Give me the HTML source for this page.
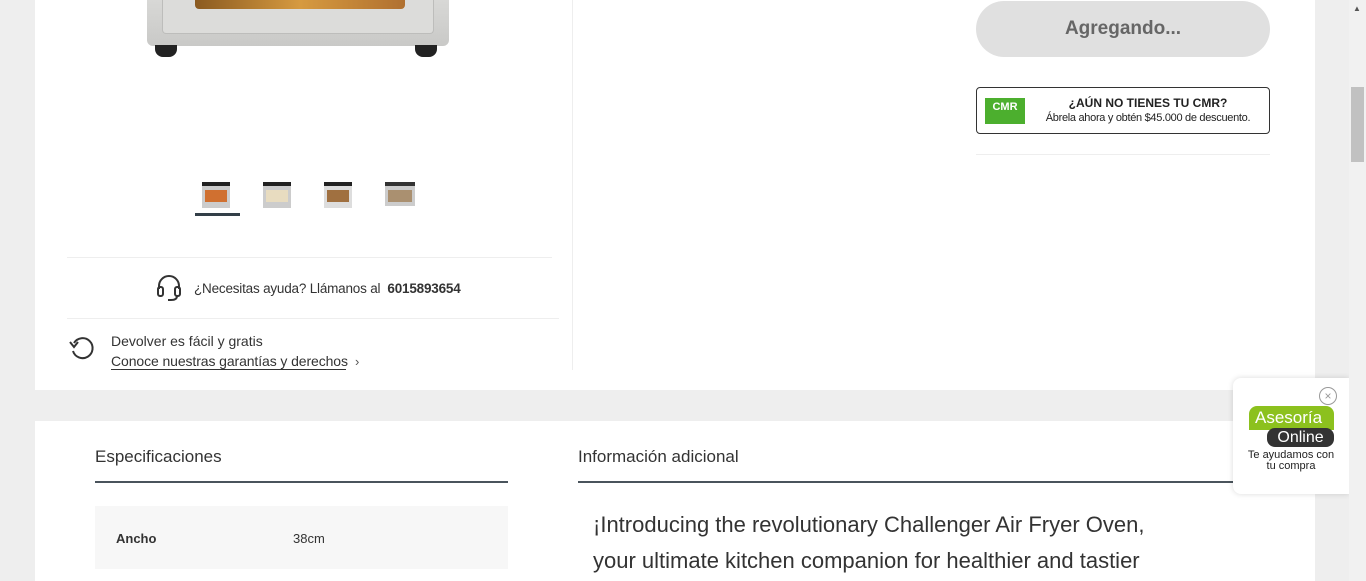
<!DOCTYPE html>
<html><head><meta charset="utf-8"><style>
*{margin:0;padding:0;box-sizing:border-box}
body{width:1366px;height:581px;overflow:hidden;background:#eeeeee;font-family:"Liberation Sans",sans-serif;color:#333;position:relative}
.a{position:absolute}
.card{background:#fff}
</style></head><body>
<div class="a card" style="left:35px;top:0;width:1280px;height:390px"></div>
<!-- oven bottom -->
<div class="a" style="left:147px;top:0;width:302px;height:46px;background:linear-gradient(#d8d8d6,#c9c9c7);border-radius:0 0 6px 6px"></div>
<div class="a" style="left:162px;top:0;width:272px;height:34px;border:1px solid #bdbdbb;border-top:none;border-radius:0 0 4px 4px;background:#dcdcda"></div>
<div class="a" style="left:195px;top:0;width:210px;height:9px;background:linear-gradient(90deg,#8a5a20,#d69a40,#b07030);border-radius:0 0 4px 4px"></div>
<div class="a" style="left:155px;top:45px;width:22px;height:12px;background:#222;border-radius:0 0 8px 8px"></div>
<div class="a" style="left:415px;top:45px;width:22px;height:12px;background:#222;border-radius:0 0 8px 8px"></div>
<!-- thumbs -->
<div class="a" style="left:202px;top:182px;width:28px;height:26px;background:#ccc;border-top:4px solid #222"><div style="margin:4px 3px;height:12px;background:#d07030"></div></div>
<div class="a" style="left:263px;top:182px;width:28px;height:26px;background:#ccc;border-top:4px solid #222"><div style="margin:4px 3px;height:12px;background:#e8dcc0"></div></div>
<div class="a" style="left:324px;top:182px;width:28px;height:26px;background:#ddd;border-top:4px solid #222"><div style="margin:4px 3px 0 3px;height:12px;background:#a07040"></div></div>
<div class="a" style="left:385px;top:182px;width:30px;height:24px;background:#ccc;border-top:4px solid #333"><div style="margin:4px 3px;height:12px;background:#aa9070"></div></div>
<div class="a" style="left:195px;top:213px;width:45px;height:3px;background:#333f48"></div>
<div class="a" style="left:67px;top:257px;width:485px;height:1px;background:#eee"></div>
<div class="a" style="left:67px;top:318px;width:492px;height:1px;background:#eee"></div>
<div class="a" style="left:572px;top:0;width:1px;height:370px;background:#eee"></div>
<svg class="a" style="left:156px;top:274px" width="26" height="28" viewBox="0 0 26 28"><path d="M3 15V12a10 10 0 0 1 20 0v3" fill="none" stroke="#333" stroke-width="2"/><rect x="2" y="13" width="5" height="9" rx="2" fill="none" stroke="#333" stroke-width="2"/><rect x="19" y="13" width="5" height="9" rx="2" fill="none" stroke="#333" stroke-width="2"/><path d="M21 22q0 4-6 4h-3" fill="none" stroke="#333" stroke-width="2"/></svg>
<div class="a" style="left:194px;top:281px;font-size:13.5px;color:#333;letter-spacing:-0.2px">¿Necesitas ayuda? Llámanos al &nbsp;<b>6015893654</b></div>
<svg class="a" style="left:68px;top:335px" width="28" height="26" viewBox="0 0 28 26"><path d="M6 8A10 10 0 1 1 5 16" fill="none" stroke="#333" stroke-width="2"/><path d="M2 7l4 5 4-5" fill="none" stroke="#333" stroke-width="2"/></svg>
<div class="a" style="left:111px;top:333px;font-size:14px;color:#333">Devolver es fácil y gratis</div>
<div class="a" style="left:111px;top:353px;font-size:14px;color:#333;border-bottom:1px solid #333;line-height:16px;letter-spacing:-0.1px;width:235px;white-space:nowrap">Conoce nuestras garantías y derechos</div>
<div class="a" style="left:355px;top:354px;font-size:13px;color:#555">›</div>
<!-- right column -->
<div class="a" style="left:976px;top:1px;width:294px;height:56px;border-radius:28px;background:#e0e0e0;color:#666;font-weight:bold;font-size:19px;text-align:center;line-height:56px">Agregando...</div>
<div class="a" style="left:976px;top:87px;width:294px;height:47px;border:1px solid #333;border-radius:4px"></div>
<div class="a" style="left:985px;top:98px;width:40px;height:26px;background:#4caf2e;color:#fff;font-size:11px;font-weight:bold;text-align:center;line-height:18px">CMR</div>
<div class="a" style="left:1030px;top:96px;width:236px;text-align:center;font-size:12px;color:#222;font-weight:bold">¿AÚN NO TIENES TU CMR?</div>
<div class="a" style="left:1030px;top:112px;width:236px;text-align:center;font-size:11px;color:#222;letter-spacing:-0.3px">Ábrela ahora y obtén $45.000 de descuento.</div>
<div class="a" style="left:976px;top:154px;width:294px;height:1px;background:#eee"></div>
<!-- bottom card -->
<div class="a card" style="left:35px;top:421px;width:1280px;height:160px"></div>
<div class="a" style="left:95px;top:447px;font-size:17px;color:#333">Especificaciones</div>
<div class="a" style="left:95px;top:481px;width:413px;height:2px;background:#4a545c"></div>
<div class="a" style="left:95px;top:506px;width:413px;height:63px;background:#f7f7f7"></div>
<div class="a" style="left:116px;top:531px;font-size:13px;font-weight:bold;color:#333">Ancho</div>
<div class="a" style="left:293px;top:531px;font-size:13px;color:#333">38cm</div>
<div class="a" style="left:578px;top:447px;font-size:17px;color:#333">Información adicional</div>
<div class="a" style="left:578px;top:481px;width:660px;height:2px;background:#4a545c"></div>
<div class="a" style="left:593px;top:507px;font-size:22px;line-height:36px;color:#333;width:585px">¡Introducing the revolutionary Challenger Air Fryer Oven, your ultimate kitchen companion for healthier and tastier</div>
<!-- chat widget -->
<div class="a" style="left:1233px;top:378px;width:116px;height:116px;background:#fff;border-radius:8px 0 0 8px;box-shadow:0 0 6px rgba(0,0,0,.15)"></div>
<div class="a" style="left:1319px;top:387px;width:18px;height:18px;border:1px solid #999;border-radius:50%;color:#999;font-size:12px;text-align:center;line-height:16px">×</div>
<div class="a" style="left:1249px;top:406px;width:85px;height:24px;background:#8cc11e;border-radius:8px 8px 0 0;color:#fff;font-size:17px;line-height:24px;padding-left:6px">Asesoría</div>
<div class="a" style="left:1267px;top:428px;width:67px;height:19px;background:#333;border-radius:8px;color:#fff;font-size:16px;line-height:19px;text-align:center">Online</div>
<div class="a" style="left:1245px;top:450px;width:92px;text-align:center;font-size:11px;line-height:11px;color:#222">Te ayudamos con tu compra</div>
<!-- scrollbar -->
<div class="a" style="left:1349px;top:0;width:17px;height:581px;background:#f1f1f1"></div>
<div class="a" style="left:1351px;top:87px;width:13px;height:75px;background:#c1c1c1"></div>
<div class="a" style="left:1353px;top:4px;font-size:8px;color:#555">▲</div>
</body></html>
